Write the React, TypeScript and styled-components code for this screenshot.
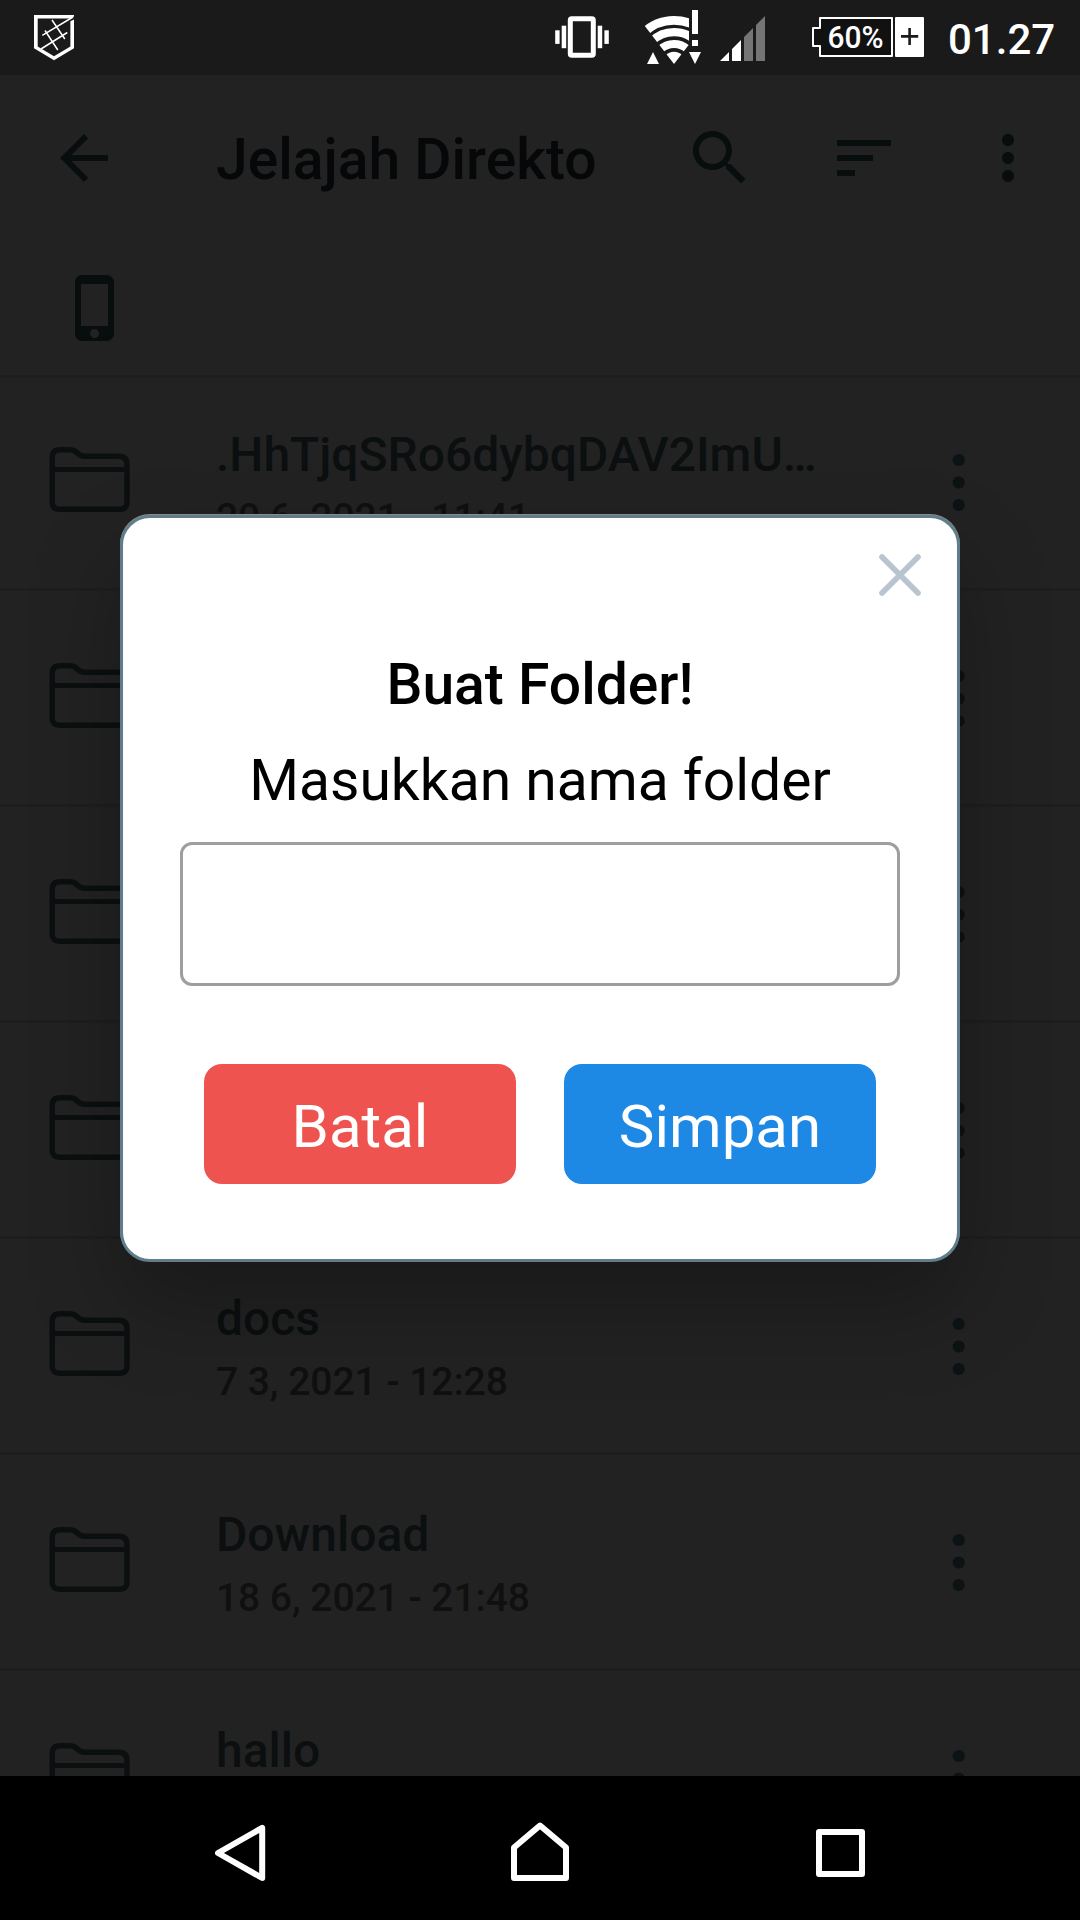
import React from "react";
import styled, { createGlobalStyle } from "styled-components";

const GlobalStyle = createGlobalStyle`
  *, *::before, *::after { box-sizing: border-box; }
  html, body { margin: 0; padding: 0; background: #000; }
  body { font-family: Roboto, "Noto Sans", sans-serif; }
  svg { display: block; flex: none; }
`;

const ink = "#080d0e";

const Screen = styled.div`
  position: relative;
  display: flex;
  flex-direction: column;
  width: 1080px;
  height: 1920px;
  overflow: hidden;
  background: #222222;
`;

const StatusBar = styled.header`
  display: flex;
  align-items: flex-start;
  flex: none;
  height: 75px;
  padding: 0 25px 0 34px;
  background: #1a1a1a;
`;

const StatusIcons = styled.div`
  display: flex;
  margin-left: auto;
`;

const StatusIcon = styled.svg<{ $gap: number }>`
  margin-right: ${(p) => p.$gap}px;
`;

const Clock = styled.time`
  color: #ffffff;
  font-size: 42px;
  font-weight: 500;
  line-height: 79px;
  width: 107px;
`;

const Toolbar = styled.div`
  display: flex;
  align-items: center;
  flex: none;
  height: 166px;
  padding-left: 48px;
`;

const Title = styled.h1`
  flex: 1;
  margin: 0 0 0 96px;
  padding-top: 3px;
  color: #050708;
  font-size: 57px;
  font-weight: 500;
  line-height: 68px;
  white-space: nowrap;
`;

const ToolButton = styled.button`
  display: flex;
  align-items: center;
  justify-content: center;
  width: 144px;
  height: 144px;
  padding: 0;
  border: 0;
  background: none;
`;

const StorageBar = styled.div`
  flex: none;
  height: 134px;
  padding: 31px 0 0 60px;
`;

const FileList = styled.main`
  flex: 1;
  min-height: 0;
  overflow: hidden;
  border-top: 3px solid #1e1e1e;
`;

const Row = styled.div`
  display: grid;
  grid-template-columns: 167px 1fr 40px;
  align-items: start;
  height: 216px;
  padding: 52px 101px 0 49px;
  border-bottom: 3px solid #1e1e1e;

  &:first-child {
    margin-top: -3px;
  }
`;

const FolderSlot = styled.div`
  padding-top: 19px;
`;

const DotsSlot = styled.div`
  padding-top: 25px;
  justify-self: center;
`;

const FileName = styled.div`
  color: #0b0f10;
  font-size: 48px;
  font-weight: 500;
  line-height: 56px;
  white-space: nowrap;
`;

const FileDate = styled.div`
  margin-top: 12px;
  color: #101010;
  font-size: 39px;
  font-weight: 500;
  letter-spacing: -0.05px;
  line-height: 46px;
  white-space: nowrap;
`;

const NavBar = styled.nav`
  display: grid;
  grid-template-columns: repeat(3, 300px);
  justify-content: center;
  justify-items: center;
  align-items: center;
  flex: none;
  height: 144px;
  padding-top: 10px;
  background: #000000;
`;

const Overlay = styled.div`
  position: absolute;
  inset: 0 0 144px;
  display: flex;
  align-items: center;
  justify-content: center;
  overflow: hidden;
`;

const Dialog = styled.section`
  display: flex;
  flex-direction: column;
  align-items: center;
  width: 840px;
  height: 747px;
  padding-top: 33px;
  border: 3px solid #607d8b;
  border-radius: 30px;
  background: #ffffff;
  box-shadow: 0 -1px 0 #8d8a88, 0 44px 90px rgba(0, 0, 0, 0.26);
`;

const CloseButton = styled.button`
  align-self: flex-end;
  width: 48px;
  height: 48px;
  margin-right: 33px;
  padding: 0;
  border: 0;
  background: none;
`;

const DialogTitle = styled.h2`
  margin: 52px 0 0;
  color: #000000;
  font-size: 57px;
  font-weight: 500;
  line-height: 68px;
`;

const DialogText = styled.p`
  margin: 28px 0 0;
  color: #000000;
  font-size: 57px;
  line-height: 68px;
`;

const NameInput = styled.input`
  width: 720px;
  height: 144px;
  margin-top: 27px;
  padding: 0 24px;
  border: 3px solid #9e9e9e;
  border-radius: 12px;
  background: #ffffff;
  font: inherit;
  font-size: 48px;
`;

const Actions = styled.div`
  display: flex;
  gap: 48px;
  margin-top: 78px;
`;

const ActionButton = styled.button<{ $color: string }>`
  width: 312px;
  height: 120px;
  padding: 6px 0 0;
  border: 0;
  border-radius: 18px;
  background: ${(p) => p.$color};
  color: #ffffff;
  font-family: inherit;
  font-size: 60px;
  line-height: 70px;
`;

const ShieldIcon = () => (
  <svg width="41" height="75" viewBox="34 0 41 75" fill="none" stroke="#fff">
    <path d="M34 15H74V16.5L71 18.5H37.7V46.5L54 56.3L70.4 46.5V21.2L74 19.4V48.2L54 60.2L34 48.2Z" fill="#fff" stroke="none" />
    <path d="M73 17L42.3 35.3M41 49L67.3 32.5M52 20L64.8 39M45 30.5L57.8 50" strokeWidth="1.5" />
  </svg>
);

const VibrateIcon = () => (
  <StatusIcon $gap={31} width="54" height="75" viewBox="555 0 54 75" fill="#fff">
    <rect x="570.3" y="18.8" width="23" height="36.4" rx="1.5" fill="none" stroke="#fff" strokeWidth="5" />
    <rect x="555.2" y="30.3" width="4.4" height="13.6" />
    <rect x="561.7" y="25.7" width="4.5" height="22.5" />
    <rect x="597.7" y="25.7" width="4.5" height="22.5" />
    <rect x="604.4" y="30.3" width="4.4" height="13.6" />
  </StatusIcon>
);

const WifiIcon = () => (
  <StatusIcon $gap={18} width="62" height="75" viewBox="640 0 62 75" fill="#fff">
    <clipPath id="wifi-sector">
      <path d="M674 64L640 19.8V5H689V44.4Z" />
    </clipPath>
    <g clipPath="url(#wifi-sector)">
      <g fill="none" stroke="#fff">
        <circle cx="674" cy="63.7" r="43.4" strokeWidth="8.8" />
        <circle cx="674" cy="63.7" r="31.6" strokeWidth="8.4" />
        <circle cx="674" cy="63.7" r="19.8" strokeWidth="8" />
      </g>
      <circle cx="674" cy="63.7" r="12" />
    </g>
    <path d="M692 10H698V34H692ZM692 40H698V46H692Z" />
    <path d="M647 64L653 52L659 64ZM689 52H701L695 64Z" />
  </StatusIcon>
);

const SignalIcon = () => (
  <StatusIcon $gap={47} width="45" height="75" viewBox="720 0 45 75">
    <path d="M720 61L729 52V61ZM732 49L741 40V61H732Z" fill="#fff" />
    <path d="M744 37L753 28V61H744ZM756 25L765 16V61H756Z" fill="#757575" />
  </StatusIcon>
);

const BatteryIcon = () => (
  <StatusIcon $gap={24} width="112" height="75" viewBox="812 0 112 75">
    <path d="M820 18H892V56H820V46H813V28H820Z" fill="#111" stroke="#fff" strokeWidth="2" strokeLinejoin="round" />
    <rect x="895" y="17" width="29" height="40" rx="1" fill="#fff" />
    <path d="M901 36.4H918.2M909.6 28V45" stroke="#1a1a1a" strokeWidth="2.6" />
    <text x="827.5" y="48" fill="#fff" fontFamily="Roboto" fontSize="32" fontWeight="500" textLength="56" lengthAdjust="spacingAndGlyphs">60%</text>
  </StatusIcon>
);

const MaterialIcon = ({ d }: { d: string }) => (
  <svg width="72" height="72" viewBox="0 0 24 24" fill={ink}>
    <path d={d} />
  </svg>
);

const paths = {
  back: "M20 11H7.83l5.59-5.59L12 4l-8 8 8 8 1.41-1.41L7.83 13H20v-2z",
  search:
    "M15.5 14h-.79l-.28-.27C15.41 12.59 16 11.11 16 9.5 16 5.91 13.09 3 9.5 3S3 5.91 3 9.5 5.91 16 9.5 16c1.61 0 3.09-.59 4.23-1.57l.27.28v.79l5 4.99L20.49 19l-4.99-5zm-6 0C7.01 14 5 11.99 5 9.5S7.01 5 9.5 5 14 7.01 14 9.5 11.99 14 9.5 14z",
  sort: "M3 18h6v-2H3v2zM3 6v2h18V6H3zm0 7h12v-2H3v2z",
  more: "M12 8c1.1 0 2-.9 2-2s-.9-2-2-2-2 .9-2 2 .9 2 2 2zm0 2c-1.1 0-2 .9-2 2s.9 2 2 2 2-.9 2-2-.9-2-2-2zm0 6c-1.1 0-2 .9-2 2s.9 2 2 2 2-.9 2-2-.9-2-2-2z",
  phone:
    "M15.5 1h-8C6.12 1 5 2.12 5 3.5v17C5 21.88 6.12 23 7.5 23h8c1.38 0 2.5-1.12 2.5-2.5v-17C18 2.12 16.88 1 15.5 1zm-4 21c-.83 0-1.5-.67-1.5-1.5s.67-1.5 1.5-1.5 1.5.67 1.5 1.5-.67 1.5-1.5 1.5zm4.5-4H7V4h9v14z",
};

const FolderIcon = () => (
  <svg width="82" height="68" viewBox="49.4 446 82 68" fill="none" stroke="#0b0f10" strokeWidth="5.4">
    <path d="M52.6 502V457.5Q52.6 449.7 60.5 449.7H70Q74.2 449.7 77 452.3Q80.6 456.2 84.5 456.2H119Q127.4 456.2 127.4 464.5V502Q127.4 509.2 120.2 509.2H59.8Q52.6 509.2 52.6 502Z" />
    <path d="M52.6 469.5H127.4" strokeWidth="5" />
  </svg>
);

const RowDots = () => (
  <svg width="14" height="60" viewBox="0 0 14 60" fill="#0d1215">
    <circle cx="6.7" cy="8" r="6.1" />
    <circle cx="6.7" cy="30.5" r="6.1" />
    <circle cx="6.7" cy="53" r="6.1" />
  </svg>
);

type Entry = { name?: string; date?: string };

const entries: Entry[] = [
  { name: ".HhTjqSRo6dybqDAV2ImU…", date: "20 6, 2021 - 11:41" },
  {},
  {},
  {},
  { name: "docs", date: "7 3, 2021 - 12:28" },
  { name: "Download", date: "18 6, 2021 - 21:48" },
  { name: "hallo" },
];

export default function App() {
  return (
    <Screen>
      <GlobalStyle />
      <StatusBar>
        <ShieldIcon />
        <StatusIcons>
          <VibrateIcon />
          <WifiIcon />
          <SignalIcon />
          <BatteryIcon />
          <Clock>01.27</Clock>
        </StatusIcons>
      </StatusBar>

      <Toolbar>
        <MaterialIcon d={paths.back} />
        <Title>Jelajah Direkto</Title>
        <ToolButton><MaterialIcon d={paths.search} /></ToolButton>
        <ToolButton><MaterialIcon d={paths.sort} /></ToolButton>
        <ToolButton><MaterialIcon d={paths.more} /></ToolButton>
      </Toolbar>

      <StorageBar>
        <MaterialIcon d={paths.phone} />
      </StorageBar>

      <FileList>
        {entries.map((entry, i) => (
          <Row key={i}>
            <FolderSlot><FolderIcon /></FolderSlot>
            <div>
              {entry.name && <FileName>{entry.name}</FileName>}
              {entry.date && <FileDate>{entry.date}</FileDate>}
            </div>
            <DotsSlot><RowDots /></DotsSlot>
          </Row>
        ))}
      </FileList>

      <NavBar>
        <svg width="60" height="70" viewBox="210 1818 60 70" fill="none" stroke="#fff" strokeWidth="6" strokeLinejoin="round">
          <path d="M218 1853L262.2 1827.8V1878Z" />
        </svg>
        <svg width="70" height="70" viewBox="505 1818 70 70" fill="none" stroke="#fff" strokeWidth="6" strokeLinejoin="round">
          <path d="M514 1878V1847.5L540 1825.5L566 1847.5V1878Z" />
        </svg>
        <svg width="60" height="70" viewBox="810 1818 60 70" fill="none" stroke="#fff" strokeWidth="6" strokeLinejoin="round">
          <path d="M819 1832H862V1874H819Z" />
        </svg>
      </NavBar>

      <Overlay>
        <Dialog>
          <CloseButton>
            <svg width="48" height="48" viewBox="0 0 48 48" stroke="#b8c4d0" strokeWidth="5.6" strokeLinecap="round">
              <path d="M6 6L42 42M42 6L6 42" />
            </svg>
          </CloseButton>
          <DialogTitle>Buat Folder!</DialogTitle>
          <DialogText>Masukkan nama folder</DialogText>
          <NameInput />
          <Actions>
            <ActionButton $color="#ef5350">Batal</ActionButton>
            <ActionButton $color="#1e88e5">Simpan</ActionButton>
          </Actions>
        </Dialog>
      </Overlay>
    </Screen>
  );
}
